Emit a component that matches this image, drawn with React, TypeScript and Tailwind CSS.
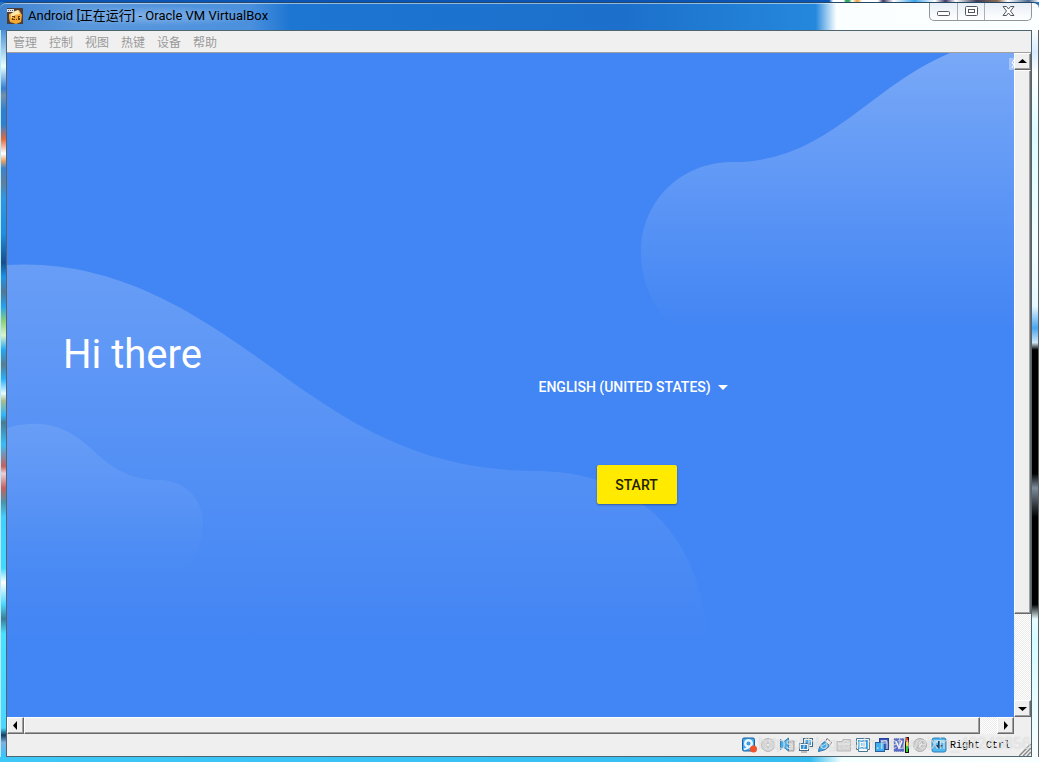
import type { ReactNode } from "react";

const menus = ["管理", "控制", "视图", "热键", "设备", "帮助"];

const bevel =
  "bg-[#efefef] border border-t-white border-l-white border-r-[#696969] border-b-[#696969] shadow-[inset_-1px_-1px_0_#a0a0a0]";

const track =
  "bg-[#f4f4f4] bg-[repeating-conic-gradient(#ffffff_0_25%,#ebebeb_0_50%)] bg-[length:2px_2px]";

function AppIcon() {
  return (
    <svg width="16" height="16" viewBox="0 0 16 16" className="shrink-0">
      <rect width="16" height="16" fill="#4d3b35" />
      <path d="M2 6l5-2 5-2 3 5-1 7-5 2-6-2-1-4z" fill="#f4a932" />
      <path d="M4 6l4-3 3-1 2 4-5 1-4 3z" fill="#ffe8b0" />
      <path d="M0 1h7v3H0z" fill="#e6e6e6" />
      <path d="M1 2h1v1H1zM3 2h1v1H3zM5 2h1v1H5z" fill="#555" />
      <path d="M5 8h3v2H6v1h2v1H5v-2h2V9H5zM9 11h1v1H9zM11 8h2v1h-1v1h1v2h-2z" fill="#6b3b12" />
    </svg>
  );
}

function TitleBar() {
  return (
    <header>
      <div className="h-0.5 bg-[linear-gradient(to_right,#0a55b5_0,#0a55b5_79.8%,#ffffff_80.2%,#ffffff_81.2%,#2fa860_81.4%,#2fa860_81.7%,#ffffff_82%,#e9a23c_82.5%,#ffffff_83%,#ffffff_84.5%,#403a66_85%,#ffffff_86%,#3fa4ea_88%,#ffffff_90%,#403a66_91%,#ffffff_92%,#3c3c58_94%,#8a6a50_96%,#ffffff_97%,#4a6a90_99%,#ffffff_100%)]" />
      <div className="flex h-7 items-start justify-between rounded-t-md border-t border-[#274864] bg-[linear-gradient(to_right,#3f83d0_0,#5a98dc_8%,#4b90dd_24%,#1d76d2_28%,#1c70cb_60%,#2588dc_78.500%,#fbfeff_80.500%,#fbffff_100%)] pr-[7px] pl-[7px] shadow-[inset_0_1px_0_rgba(255,255,255,0.5)]">
        <div className="flex h-[26px] items-center gap-[5px]">
          <AppIcon />
          <h1 className="bg-[radial-gradient(closest-side,rgba(180,210,245,0.45),transparent)] font-[Roboto,'Noto_Sans_CJK_SC',sans-serif] text-[13px] leading-5 whitespace-nowrap text-black">
            Android [正在运行] - Oracle VM VirtualBox
          </h1>
        </div>
        <div className="flex h-[18px] overflow-hidden rounded-b-[5px] border border-t-0 border-[#8e979c] bg-linear-to-b from-[#e8eef6] to-white">
          <button aria-label="Minimize" className="flex w-7 items-center justify-center border-r border-[#a9b1b5]">
            <svg width="13" height="13" viewBox="0 0 13 13">
              <rect x="0.500" y="6.500" width="12" height="4" rx="1" fill="#fff" stroke="#53575f" />
            </svg>
          </button>
          <button aria-label="Maximize" className="flex w-[27px] items-center justify-center border-r border-[#a9b1b5]">
            <svg width="13" height="13" viewBox="0 0 13 13">
              <rect x="0.500" y="1.500" width="12" height="9" rx="1" fill="#fff" stroke="#53575f" />
              <rect x="3.500" y="4.500" width="6" height="3" fill="#fff" stroke="#53575f" />
            </svg>
          </button>
          <button aria-label="Close" className="flex w-[46px] items-center justify-center">
            <svg width="13" height="13" viewBox="0 0 13 13">
              <path
                d="M1 1.500h3.500l2 2.500 2-2.500H12L8.500 6l3.500 4.500H8.500l-2-2.500-2 2.500H1L4.500 6z"
                fill="#fff"
                stroke="#53575f"
                strokeLinejoin="round"
              />
            </svg>
          </button>
        </div>
      </div>
    </header>
  );
}

function MenuBar() {
  return (
    <nav className="flex h-[22px] shrink-0 items-center gap-3 border-b border-[#a0a0a0] bg-[#f0f0f0] px-1.5">
      {menus.map((name) => (
        <button
          key={name}
          className="font-['Noto_Sans_CJK_SC',sans-serif] text-xs leading-4 text-[#9a9a9a]"
        >
          {name}
        </button>
      ))}
    </nav>
  );
}

function Waves() {
  return (
    <svg
      className="absolute inset-0 h-full w-full"
      viewBox="0 0 1007 664"
      preserveAspectRatio="none"
      aria-hidden="true"
    >
      <defs>
        <linearGradient id="top" gradientUnits="userSpaceOnUse" x1="0" y1="0" x2="0" y2="276">
          <stop offset="0" stopColor="#fff" stopOpacity="0.29" />
          <stop offset="1" stopColor="#fff" stopOpacity="0" />
        </linearGradient>
        <linearGradient id="large" gradientUnits="userSpaceOnUse" x1="0" y1="212" x2="0" y2="590">
          <stop offset="0" stopColor="#fff" stopOpacity="0.2" />
          <stop offset="1" stopColor="#fff" stopOpacity="0" />
        </linearGradient>
        <linearGradient id="small" gradientUnits="userSpaceOnUse" x1="0" y1="370" x2="0" y2="520">
          <stop offset="0" stopColor="#fff" stopOpacity="0.1" />
          <stop offset="1" stopColor="#fff" stopOpacity="0" />
        </linearGradient>
      </defs>
      <path
        d="M1007 0H943C860 35 820 109 726 109C672 109 634 150 634 199C634 235 650 262 676 280H1007Z"
        fill="url(#top)"
      />
      <path
        d="M0 212C115 205 200 268 275 322C350 376 420 418 530 418C630 418 697 485 700 590H0Z"
        fill="url(#large)"
      />
      <path
        d="M0 375C60 358 80 397 105 413C125 426 140 427 155 427C180 429 196 447 196 470C196 492 188 508 172 520H0Z"
        fill="url(#small)"
      />
      <path d="M1002 5h5v12h-5z" fill="#fff" opacity="0.35" />
      <path d="M1007 7l-2 3 2 1-2 4" fill="none" stroke="#fff" />
    </svg>
  );
}

function Arrow({ d }: { d: string }) {
  return (
    <svg width="9" height="9" viewBox="0 0 9 9">
      <path d={d} fill="#000" />
    </svg>
  );
}

function ScrollButton({ label, d }: { label: string; d: string }) {
  return (
    <button
      aria-label={label}
      className={`flex size-[17px] shrink-0 items-center justify-center ${bevel}`}
    >
      <Arrow d={d} />
    </button>
  );
}

function Guest() {
  return (
    <main className="relative grid flex-1 grid-cols-2 overflow-hidden bg-[#4285f4] font-[Roboto,sans-serif] text-white">
      <Waves />
      <h2 className="relative pt-[277px] pl-14 text-[40px] leading-[50px]">Hi there</h2>
      <div className="relative flex flex-col items-start pt-[322px] pl-7">
        <div className="flex items-center">
          <select
            aria-label="Language"
            className="field-sizing-content appearance-none bg-transparent text-sm leading-6 font-medium"
          >
            <option>ENGLISH (UNITED STATES)</option>
          </select>
          <svg width="24" height="24" viewBox="0 0 24 24" aria-hidden="true">
            <path d="M7 10l5 5 5-5z" fill="#fff" />
          </svg>
        </div>
        <button className="mt-[66px] ml-[58px] h-[39px] w-20 rounded-xs bg-[#ffea00] text-sm font-medium text-[#222200] shadow-[0_1px_2px_rgba(0,0,0,0.35)]">
          START
        </button>
      </div>
    </main>
  );
}

function StatusIcon({ label, children }: { label: string; children: ReactNode }) {
  return (
    <svg width="16" height="16" viewBox="0 0 16 16" role="img" aria-label={label} className="shrink-0">
      {children}
    </svg>
  );
}

function StatusBar() {
  return (
    <footer className="relative flex h-[22px] shrink-0 items-center justify-end gap-[3px] bg-[#efefef] pr-[21px]">
      <StatusIcon label="Hard disk">
        <rect x="1.500" y="1" width="12" height="13" rx="1.500" fill="#3fa9f0" stroke="#1c5f9c" />
        <circle cx="7.500" cy="6.500" r="4.500" fill="#e8f6ff" />
        <circle cx="7.500" cy="6.500" r="2" fill="#3f9be0" />
        <path d="M3 12.500l5-2" stroke="#fff" strokeWidth="1.500" />
        <circle cx="12.500" cy="12" r="3.500" fill="#f0522c" />
      </StatusIcon>
      <StatusIcon label="Optical drive">
        <circle cx="8" cy="8" r="6.500" fill="#dadada" stroke="#b8b8b8" />
        <circle cx="8" cy="8" r="2" fill="#f4f4f4" stroke="#b5b5b5" />
      </StatusIcon>
      <StatusIcon label="Audio">
        <path d="M9 4h6v10H9z" fill="#c8c8c8" stroke="#a2a2a2" />
        <path d="M10 7h4M10 9.500h4M10 12h4" stroke="#f0f0f0" />
        <path d="M1.500 2.500l3 2.500 5-4v13l-5-4-3 2.500z" fill="#42b0ef" stroke="#3f7fb4" />
      </StatusIcon>
      <StatusIcon label="Network">
        <rect x="5.500" y="1.500" width="9" height="8" fill="#f4faff" stroke="#42687f" />
        <rect x="7" y="3" width="6" height="5" fill="#38a5ed" />
        <rect x="1.500" y="6.500" width="9" height="7" fill="#f4faff" stroke="#42687f" />
        <rect x="3" y="8" width="6" height="4" fill="#258dd9" />
        <path d="M3 15h6" stroke="#888" />
      </StatusIcon>
      <StatusIcon label="USB">
        <path d="M10 1.500l4.500 4-2 3-4-4z" fill="#f5fbff" stroke="#777" />
        <path d="M8 4.500l4.500 4.500-4 3.500-5 1.500-2 .500.500-3 2-4z" fill="#3ba8ef" stroke="#31719f" />
        <path d="M5 9l4-2.500" stroke="#b6e2ff" />
      </StatusIcon>
      <StatusIcon label="Shared folders">
        <path d="M1 4.500h5l1-2h7.500V14H1z" fill="#d6d6d6" stroke="#bababa" />
        <path d="M2 7h12" stroke="#eee" />
      </StatusIcon>
      <StatusIcon label="Display">
        <path d="M1.500 1.500h13v11h-2v2h-9v-2h-2z" fill="#f8fcff" stroke="#467691" />
        <rect x="3" y="3" width="10" height="9" fill="#2f9fe8" />
        <rect x="5.500" y="5.500" width="5" height="4" fill="#7cc8f8" stroke="#fff" />
        <path d="M8 5v5" stroke="#fff" />
      </StatusIcon>
      <StatusIcon label="Recording">
        <rect x="5.500" y="1.500" width="9" height="11" fill="#3456c5" stroke="#26418e" />
        <rect x="1.500" y="5.500" width="9" height="9" fill="#3db0f3" stroke="#2c5f99" />
        <path d="M7 4h6M9 6h4" stroke="#c7d9ff" />
      </StatusIcon>
      <StatusIcon label="Virtualization">
        <rect x="1" y="1.500" width="10" height="13" fill="#5468c8" stroke="#7c88bb" strokeDasharray="1 1" />
        <path d="M3 4l3 7 3-7" fill="none" stroke="#fff" strokeWidth="1.500" />
        <path d="M12 0h4v16h-4z" fill="#111" />
        <path d="M13 1h2v4h-2z" fill="#e5321d" />
        <path d="M13 5h2v4h-2z" fill="#f5dc16" />
        <path d="M13 9h2v6h-2z" fill="#36ce30" />
      </StatusIcon>
      <StatusIcon label="Mouse integration">
        <circle cx="8" cy="8" r="6.500" fill="#d0d0d0" stroke="#b0b0b0" />
        <path d="M5 11l5-7 1 3-3 4z" fill="#f2f2f2" stroke="#b0b0b0" />
      </StatusIcon>
      <StatusIcon label="Keyboard capture">
        <rect x="1" y="1" width="14" height="14" rx="2" fill="#4cb8f4" stroke="#347eae" />
        <path d="M3 3h10v3H3z" fill="#a3dffc" />
        <path d="M7 4h2v4h3l-4 4-4-4h3z" fill="#163f6b" />
      </StatusIcon>
      <span className="font-['Liberation_Mono',monospace] text-[10px] text-black">Right Ctrl</span>
      <svg width="12" height="12" viewBox="0 0 12 12" className="absolute right-0 bottom-0" aria-hidden="true">
        <path d="M0 12L12 0M4 12l8-8M8 12l4-4" stroke="#8c8c8c" strokeWidth="1.500" />
      </svg>
      <span className="pointer-events-none absolute right-0 bottom-0.5 font-['Liberation_Sans',sans-serif] text-base leading-5 whitespace-nowrap text-white/60 [text-shadow:0_0_1px_rgba(120,120,120,0.4)]">
        https://blog.csdn.net/weixin_43243856
      </span>
    </footer>
  );
}

export default function App() {
  return (
    <div className="flex h-screen min-h-[600px] flex-col overflow-hidden bg-[#1f79d2]">
      <TitleBar />
      <div className="flex min-h-0 flex-1">
        <div className="w-1.5 shrink-0 border-l border-[#b9e9fb] bg-[linear-gradient(to_bottom,#4a8ed6_0,#e8ffff_5%,#377fd0_8%,#7790aa_9%,#2f7fd0_11%,#2f7fd0_13%,#e26a3a_15%,#ffffff_17%,#e8a268_18%,#3a83cc_19%,#607f9c_21%,#2f96e3_23%,#1f8de0_28%,#174f8c_32%,#1c93e8_34%,#507796_36%,#24a0ee_38%,#8ccf78_40%,#d8f5c8_42%,#22a6f4_44%,#587c8c_46%,#28b0fc_48%,#e8fbff_50%,#a9bd8e_51%,#2fb4f8_53%,#4a7a92_54%,#38bdfa_57%,#c6605c_60%,#eacfd8_61%,#c6605c_63%,#4b93ac_65%,#42d0ff_67%,#42d8ff_74%,#ffffff_76%,#4ad8ff_79%,#3c7c94_81%,#4ae0ff_83%,#48d8ff_96%,#173a5e_97%,#7fb0dc_98%,#36c4ff_100%)]" />
        <div className="flex min-w-0 flex-1 flex-col border border-[#4f6670] bg-[#efefef]">
          <MenuBar />
          <div className="flex min-h-0 flex-1">
            <Guest />
            <div className={`flex w-[17px] shrink-0 flex-col ${track}`}>
              <ScrollButton label="Scroll up" d="M0 6h9L4.500 2z" />
              <div className={`flex-[543] ${bevel}`} />
              <div className="flex-[86]" />
              <ScrollButton label="Scroll down" d="M0 3h9L4.500 7z" />
            </div>
          </div>
          <div className="flex h-[17px] shrink-0">
            <div className={`flex flex-1 ${track}`}>
              <ScrollButton label="Scroll left" d="M6 0v9L2 4.500z" />
              <div className={`flex-[956] ${bevel}`} />
              <div className="flex-[17]" />
              <ScrollButton label="Scroll right" d="M3 0v9L7 4.500z" />
            </div>
            <div className="w-[17px] bg-[#efefef]" />
          </div>
          <StatusBar />
        </div>
        <div className="w-[7px] shrink-0 border-r border-[#5a6468] bg-[linear-gradient(to_bottom,#fbffff_0,#d8ecff_3%,#ffffff_6%,#dcfcff_14%,#f4ffff_30%,#e6f8ff_38%,#4aa4f0_41%,#cfe8f6_43%,#000000_44%,#000000_61%,#7f8c9c_63%,#000000_67%,#000000_79%,#e8fcff_81%,#d4fcff_84%,#fafeff_100%)]" />
      </div>
      <div className="h-[5px] shrink-0 bg-[linear-gradient(to_right,#3dc8f8_0,#35bdf0_78%,#f4ffff_81%,#f8ffff_100%)]" />
    </div>
  );
}
